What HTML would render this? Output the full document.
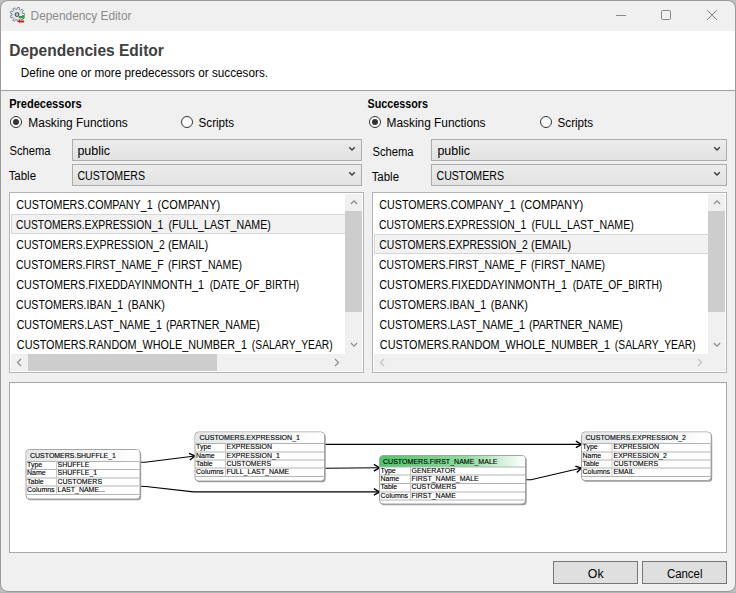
<!DOCTYPE html>
<html lang="en">
<head>
<meta charset="utf-8">
<title>Dependency Editor</title>
<style>
html,body{margin:0;padding:0;}
body{width:736px;height:593px;overflow:hidden;background:#b9bdc2;font-family:"Liberation Sans",sans-serif;font-size:12px;color:#000;position:relative;}
#win{position:absolute;left:0;top:0;width:734px;height:590px;border:1px solid #9b9b9b;border-radius:8px;background:#f0f0f0;overflow:hidden;box-sizing:content-box;}
#bottomstrip{position:absolute;left:0;top:592px;width:736px;height:1px;background:#b4b4b6;}
.abs{position:absolute;}
.t{position:absolute;white-space:nowrap;line-height:14px;height:14px;}
.b{font-weight:bold;}
#hdr{position:absolute;left:0;top:30px;width:734px;height:59px;background:#fff;border-bottom:1px solid #a0a0a0;}
.radio{position:absolute;width:10px;height:10px;border:1px solid #333;border-radius:50%;background:#fff;}
.radio.on::after{content:"";position:absolute;left:2px;top:2px;width:6px;height:6px;border-radius:50%;background:#333;}
.combo{position:absolute;height:20px;border:1px solid #adadad;background:linear-gradient(#ececec,#e2e2e2);}
.combo svg{position:absolute;right:5px;top:6px;}
.list{position:absolute;border:1px solid #b4b4b4;background:#fff;top:191px;height:179px;}
.row{position:absolute;left:1px;height:20px;line-height:20px;white-space:nowrap;}
.row span{position:absolute;left:6px;top:0;}
.sel{background:#f2f2f2;border:1px solid #d6d6d6;box-sizing:border-box;}
.vsb{position:absolute;top:1px;width:17px;height:177px;background:#f0f0f0;}
.hsb{position:absolute;left:1px;top:161px;height:17px;background:#f0f0f0;}
.thumb{position:absolute;background:#cdcdcd;}
#graph{position:absolute;left:8px;top:381px;width:716px;height:169px;border:1px solid #a8a8a8;background:#fff;}
.btn{position:absolute;top:560px;width:83px;height:21px;border:1px solid #757575;background:#dfdfdf;text-align:center;}
.node{position:absolute;}
</style>
</head>
<body>
<div id="win">
  <!-- title bar -->
  <svg class="abs" style="left:9px;top:6px" width="18" height="18" viewBox="0 0 18 18">
    <path d="M14.42,6.40 L14.42,8.60 L12.48,8.60 L11.98,9.99 L13.46,11.23 L12.04,12.92 L10.56,11.68 L9.29,12.41 L9.62,14.32 L7.45,14.70 L7.12,12.80 L5.66,12.54 L4.70,14.21 L2.79,13.11 L3.75,11.44 L2.81,10.31 L0.99,10.97 L0.24,8.90 L2.05,8.24 L2.05,6.76 L0.24,6.10 L0.99,4.03 L2.81,4.69 L3.75,3.56 L2.79,1.89 L4.70,0.79 L5.66,2.46 L7.12,2.20 L7.45,0.30 L9.62,0.68 L9.29,2.59 L10.56,3.32 L12.04,2.08 L13.46,3.77 L11.98,5.01 L12.48,6.40z" fill="#e6eaee" stroke="#7f8890" stroke-width="1" stroke-linejoin="round"/>
    <circle cx="7" cy="7.6" r="1.9" fill="#c9cdd1" stroke="#4a5056" stroke-width="1.1"/>
    <path d="M8.6 9h3.800v-1.400l2.900 2.600-2.900 2.400v-1.500h-3.800z" fill="#2fa043"/>
    <path d="M7.4 14.200l2.800-2v1.200h4v2.200h-4v0.600z" fill="#c8282c"/>
  </svg>
  
  <svg class="abs" style="left:615px;top:8px" width="110" height="14" viewBox="0 0 110 14">
    <g stroke="#888" stroke-width="1" fill="none">
      <line x1="0" y1="6.5" x2="10" y2="6.5"/>
      <rect x="45.5" y="1.5" width="9" height="9" rx="1"/>
      <line x1="91" y1="1" x2="101" y2="11"/><line x1="101" y1="1" x2="91" y2="11"/>
    </g>
  </svg>

  <!-- header -->
  <div id="hdr"></div>
  
  

  <!-- predecessors -->
  
  <div class="radio on" style="left:9px;top:115px"></div>
  
  <div class="radio" style="left:180px;top:115px"></div>
  
  
  <div class="combo" style="left:71px;top:138px;width:288px">
    <svg width="8" height="6" viewBox="0 0 8 6"><path d="M1.2 1.200l2.800 2.800 2.800-2.800" fill="none" stroke="#3c3c3c" stroke-width="1.4"/></svg></div>
  
  <div class="combo" style="left:71px;top:163px;width:288px">
    <svg width="8" height="6" viewBox="0 0 8 6"><path d="M1.2 1.200l2.800 2.800 2.800-2.800" fill="none" stroke="#3c3c3c" stroke-width="1.4"/></svg></div>

  <div class="list" id="llist" style="left:8px;width:353px">
    <div class="row" style="top:1px;width:335px"></div>
    <div class="row sel" style="top:21px;width:335px;height:20px"></div>
    <div class="row" style="top:41px;width:335px"></div>
    <div class="row" style="top:61px;width:335px"></div>
    <div class="row" style="top:81px;width:335px"></div>
    <div class="row" style="top:101px;width:335px"></div>
    <div class="row" style="top:121px;width:335px"></div>
    <div class="row" style="top:141px;width:335px"></div>
    <div class="vsb" style="left:335px">
      <svg class="abs" style="left:4px;top:5px" width="9" height="6" viewBox="0 0 9 6"><path d="M1.9 5l3.100-3.100 3.100 3.100" fill="none" stroke="#8c8c8c" stroke-width="1.2"/></svg>
      <div class="thumb" style="left:0;top:17px;width:17px;height:101px"></div>
      <svg class="abs" style="left:4px;top:148px" width="9" height="6" viewBox="0 0 9 6"><path d="M1.9 1l3.100 3.100 3.100-3.100" fill="none" stroke="#8c8c8c" stroke-width="1.2"/></svg>
    </div>
    <div class="hsb" style="width:335px">
      <svg class="abs" style="left:5px;top:4px" width="6" height="9" viewBox="0 0 6 9"><path d="M5 1l-3.500 3.500 3.500 3.500" fill="none" stroke="#8c8c8c" stroke-width="1.2"/></svg>
      <div class="thumb" style="left:17px;top:0;width:189px;height:17px"></div>
      <svg class="abs" style="left:323px;top:4px" width="6" height="9" viewBox="0 0 6 9"><path d="M1 1l3.500 3.500-3.500 3.500" fill="none" stroke="#8c8c8c" stroke-width="1.2"/></svg>
    </div>
  </div>

  <!-- successors -->
  
  <div class="radio on" style="left:368px;top:115px"></div>
  
  <div class="radio" style="left:539px;top:115px"></div>
  
  
  <div class="combo" style="left:430px;top:138px;width:294px">
    <svg width="8" height="6" viewBox="0 0 8 6"><path d="M1.2 1.200l2.800 2.800 2.800-2.800" fill="none" stroke="#3c3c3c" stroke-width="1.4"/></svg></div>
  
  <div class="combo" style="left:430px;top:163px;width:294px">
    <svg width="8" height="6" viewBox="0 0 8 6"><path d="M1.2 1.200l2.800 2.800 2.800-2.800" fill="none" stroke="#3c3c3c" stroke-width="1.4"/></svg></div>

  <div class="list" id="rlist" style="left:371px;width:353px">
    <div class="row" style="top:1px;width:335px"></div>
    <div class="row" style="top:21px;width:335px"></div>
    <div class="row sel" style="top:41px;width:335px;height:20px"></div>
    <div class="row" style="top:61px;width:335px"></div>
    <div class="row" style="top:81px;width:335px"></div>
    <div class="row" style="top:101px;width:335px"></div>
    <div class="row" style="top:121px;width:335px"></div>
    <div class="row" style="top:141px;width:335px"></div>
    <div class="vsb" style="left:335px">
      <svg class="abs" style="left:4px;top:5px" width="9" height="6" viewBox="0 0 9 6"><path d="M1.9 5l3.100-3.100 3.100 3.100" fill="none" stroke="#8c8c8c" stroke-width="1.2"/></svg>
      <div class="thumb" style="left:0;top:17px;width:17px;height:101px"></div>
      <svg class="abs" style="left:4px;top:148px" width="9" height="6" viewBox="0 0 9 6"><path d="M1.9 1l3.100 3.100 3.100-3.100" fill="none" stroke="#8c8c8c" stroke-width="1.2"/></svg>
    </div>
    <div class="hsb" style="width:335px">
      <svg class="abs" style="left:5px;top:4px" width="6" height="9" viewBox="0 0 6 9"><path d="M5 1l-3.500 3.500 3.500 3.500" fill="none" stroke="#c0c0c0" stroke-width="1.1"/></svg>
      <svg class="abs" style="left:323px;top:4px" width="6" height="9" viewBox="0 0 6 9"><path d="M1 1l3.500 3.500-3.500 3.500" fill="none" stroke="#c0c0c0" stroke-width="1.1"/></svg>
    </div>
  </div>

  <!-- graph -->
  <div id="graph"></div>

  <!-- buttons -->
  <div class="btn" style="left:552px"></div>
  <div class="btn" style="left:641px"></div>
  <div class="t" id="ttl" style="left:28.60px;top:8px;color:#8b8b8b;transform:scaleX(0.9880);">Dependency Editor</div>
  <div class="t b" id="h1" style="left:6.28px;top:41px;font-size:16px;line-height:18px;height:18px;color:#404040;transform:scaleX(0.9719);">Dependencies Editor</div>
  <div class="t" id="h2" style="left:17.06px;top:65px;transform:scaleX(0.9781);">Define one or more predecessors or succesors.</div>
  <div class="t b" id="pl" style="left:5.14px;top:96px;transform:scaleX(0.9205);">Predecessors</div>
  <div class="t" id="pm" style="left:26.86px;top:115px;transform:scaleX(0.9935);">Masking Functions</div>
  <div class="t" id="ps" style="left:197.29px;top:115px;transform:scaleX(0.9698);">Scripts</div>
  <div class="t" id="psc" style="left:6.86px;top:143px;transform:scaleX(0.9337);">Schema</div>
  <div class="t" id="pc1" style="left:77.10px;top:143px;transform:scaleX(1.0396);">public</div>
  <div class="t" id="ptb" style="left:7.29px;top:168px;transform:scaleX(0.9551);">Table</div>
  <div class="t" id="pc2" style="left:71.81px;top:168px;transform:scaleX(0.8831);">CUSTOMERS</div>
  <div class="t b" id="sl" style="left:362.90px;top:96px;transform:scaleX(0.8963);">Successors</div>
  <div class="t" id="sm" style="left:385.43px;top:115px;transform:scaleX(0.9903);">Masking Functions</div>
  <div class="t" id="ss" style="left:556.29px;top:115px;transform:scaleX(0.9698);">Scripts</div>
  <div class="t" id="ssc" style="left:369.86px;top:144px;transform:scaleX(0.9337);">Schema</div>
  <div class="t" id="sc1" style="left:436.62px;top:143px;transform:scaleX(1.0341);">public</div>
  <div class="t" id="stb" style="left:370.29px;top:169px;transform:scaleX(0.9551);">Table</div>
  <div class="t" id="sc2" style="left:430.82px;top:168px;transform:scaleX(0.8829);">CUSTOMERS</div>
  <div class="t" id="bok" style="left:586.78px;top:566px;transform:scaleX(1.0253);">Ok</div>
  <div class="t" id="bcn" style="left:664.51px;top:566px;transform:scaleX(0.9530);">Cancel</div>
  <div class="t" id="l1a" style="left:6.91px;top:197px;transform:scaleX(0.8909);">CUSTOMERS.COMPANY_1</div>
  <div class="t" id="l1b" style="left:154.26px;top:197px;transform:scaleX(0.9247);">(COMPANY)</div>
  <div class="t" id="r1a" style="left:369.91px;top:197px;transform:scaleX(0.8909);">CUSTOMERS.COMPANY_1</div>
  <div class="t" id="r1b" style="left:517.26px;top:197px;transform:scaleX(0.9247);">(COMPANY)</div>
  <div class="t" id="l2a" style="left:3.21px;top:217px;transform:scaleX(0.8592);">CUSTOMERS.EXPRESSION_1</div>
  <div class="t" id="l2b" style="left:160.66px;top:217px;transform:scaleX(0.8859);">(FULL_LAST_NAME)</div>
  <div class="t" id="r2a" style="left:366.22px;top:217px;transform:scaleX(0.8592);">CUSTOMERS.EXPRESSION_1</div>
  <div class="t" id="r2b" style="left:523.66px;top:217px;transform:scaleX(0.8859);">(FULL_LAST_NAME)</div>
  <div class="t" id="l3a" style="left:3.95px;top:237px;transform:scaleX(0.8672);">CUSTOMERS.EXPRESSION_2</div>
  <div class="t" id="l3b" style="left:165.12px;top:237px;transform:scaleX(0.9134);">(EMAIL)</div>
  <div class="t" id="r3a" style="left:366.96px;top:237px;transform:scaleX(0.8673);">CUSTOMERS.EXPRESSION_2</div>
  <div class="t" id="r3b" style="left:527.91px;top:237px;transform:scaleX(0.9093);">(EMAIL)</div>
  <div class="t" id="l4a" style="left:3.58px;top:257px;transform:scaleX(0.8695);">CUSTOMERS.FIRST_NAME_F</div>
  <div class="t" id="l4b" style="left:162.13px;top:257px;transform:scaleX(0.8800);">(FIRST_NAME)</div>
  <div class="t" id="r4a" style="left:366.58px;top:257px;transform:scaleX(0.8695);">CUSTOMERS.FIRST_NAME_F</div>
  <div class="t" id="r4b" style="left:525.13px;top:257px;transform:scaleX(0.8800);">(FIRST_NAME)</div>
  <div class="t" id="l5a" style="left:5.36px;top:277px;transform:scaleX(0.9013);">CUSTOMERS.FIXEDDAYINMONTH_1</div>
  <div class="t" id="l5b" style="left:201.26px;top:277px;transform:scaleX(0.8544);">(DATE_OF_BIRTH)</div>
  <div class="t" id="r5a" style="left:368.36px;top:277px;transform:scaleX(0.9013);">CUSTOMERS.FIXEDDAYINMONTH_1</div>
  <div class="t" id="r5b" style="left:564.26px;top:277px;transform:scaleX(0.8544);">(DATE_OF_BIRTH)</div>
  <div class="t" id="l6a" style="left:8.14px;top:297px;transform:scaleX(0.8841);">CUSTOMERS.IBAN_1</div>
  <div class="t" id="l6b" style="left:125.16px;top:297px;transform:scaleX(0.9085);">(BANK)</div>
  <div class="t" id="r6a" style="left:371.14px;top:297px;transform:scaleX(0.8841);">CUSTOMERS.IBAN_1</div>
  <div class="t" id="r6b" style="left:488.16px;top:297px;transform:scaleX(0.9085);">(BANK)</div>
  <div class="t" id="l7a" style="left:5.85px;top:317px;transform:scaleX(0.8828);">CUSTOMERS.LAST_NAME_1</div>
  <div class="t" id="l7b" style="left:159.44px;top:317px;transform:scaleX(0.8884);">(PARTNER_NAME)</div>
  <div class="t" id="r7a" style="left:369.02px;top:317px;transform:scaleX(0.8838);">CUSTOMERS.LAST_NAME_1</div>
  <div class="t" id="r7b" style="left:522.44px;top:317px;transform:scaleX(0.8884);">(PARTNER_NAME)</div>
  <div class="t" id="l8a" style="left:2.61px;top:337px;transform:scaleX(0.8995);">CUSTOMERS.RANDOM_WHOLE_NUMBER_1</div>
  <div class="t" id="l8b" style="left:244.12px;top:337px;transform:scaleX(0.8545);">(SALARY_YEAR)</div>
  <div class="t" id="r8a" style="left:365.61px;top:337px;transform:scaleX(0.8995);">CUSTOMERS.RANDOM_WHOLE_NUMBER_1</div>
  <div class="t" id="r8b" style="left:607.12px;top:337px;transform:scaleX(0.8545);">(SALARY_YEAR)</div>
<svg class="abs" style="left:-1px;top:-1px" width="736" height="593" viewBox="0 0 736 593" font-family="Liberation Sans, sans-serif" font-size="7px" fill="#000" stroke="#000" stroke-width="0.12" >
<defs><linearGradient id="gh" x1="0" x2="1" y1="0" y2="0"><stop offset="0" stop-color="#e4e6e8"/><stop offset="1" stop-color="#ffffff"/></linearGradient>
<linearGradient id="gg" x1="0" x2="1" y1="0" y2="0"><stop offset="0" stop-color="#4cc766"/><stop offset="0.6" stop-color="#8fdc9f"/><stop offset="1" stop-color="#ffffff"/></linearGradient></defs>
<path d="M140.5,462.3 L145.0,462.3 L195.0,456.0" fill="none" stroke="#000" stroke-width="1.1"/><path d="M-5.6,-3.3 L0,0 L-5.6,3.3" fill="none" stroke="#000" stroke-width="1.4" stroke-linejoin="miter" transform="translate(195.0,456.0) rotate(-7.18)"/>
<path d="M140.5,486.3 L146.0,486.5 L193.5,491.9 L379.5,491.9" fill="none" stroke="#000" stroke-width="1.1"/><path d="M-5.6,-3.3 L0,0 L-5.6,3.3" fill="none" stroke="#000" stroke-width="1.4" stroke-linejoin="miter" transform="translate(379.5,491.9) rotate(0.00)"/>
<path d="M325.0,444.4 L581.5,444.4" fill="none" stroke="#000" stroke-width="1.1"/><path d="M-5.6,-3.3 L0,0 L-5.6,3.3" fill="none" stroke="#000" stroke-width="1.4" stroke-linejoin="miter" transform="translate(581.5,444.4) rotate(0.00)"/>
<path d="M325.0,468.3 L379.5,467.7" fill="none" stroke="#000" stroke-width="1.1"/><path d="M-5.6,-3.3 L0,0 L-5.6,3.3" fill="none" stroke="#000" stroke-width="1.4" stroke-linejoin="miter" transform="translate(379.5,467.7) rotate(-0.63)"/>
<path d="M526.0,479.8 L531.0,479.8 L581.5,468.0" fill="none" stroke="#000" stroke-width="1.1"/><path d="M-5.6,-3.3 L0,0 L-5.6,3.3" fill="none" stroke="#000" stroke-width="1.4" stroke-linejoin="miter" transform="translate(581.5,468.0) rotate(-13.15)"/>
<rect x="27.2" y="450.7" width="114.0" height="49.5" rx="3.5" fill="#9a9a9a" stroke="none"/>
<rect x="26.0" y="449.5" width="114.0" height="49.5" rx="3.5" fill="#fff" stroke="#a4a4a4" stroke-width="1"/>
<path d="M26.5 461.5V453.0a3 3 0 0 1 3-3H136.5a3 3 0 0 1 3 3V461.5z" fill="url(#gh)" stroke="none"/>
<line x1="26.5" y1="461.5" x2="139.5" y2="461.5" stroke="#b4b4b4" stroke-width="1"/>
<line x1="26.5" y1="469.5" x2="139.5" y2="469.5" stroke="#b4b4b4" stroke-width="1"/>
<line x1="26.5" y1="478.0" x2="139.5" y2="478.0" stroke="#b4b4b4" stroke-width="1"/>
<line x1="26.5" y1="486.0" x2="139.5" y2="486.0" stroke="#b4b4b4" stroke-width="1"/>
<line x1="26.5" y1="494.5" x2="139.5" y2="494.5" stroke="#b4b4b4" stroke-width="1"/>
<line x1="56.5" y1="461.5" x2="56.5" y2="494.5" stroke="#c8c8c8" stroke-width="1"/>
<text x="30.0" y="458.0" textLength="86.0" lengthAdjust="spacingAndGlyphs">CUSTOMERS.SHUFFLE_1</text>
<text x="27.0" y="467.0">Type</text>
<text x="57.5" y="467.0">SHUFFLE</text>
<text x="27.0" y="475.0">Name</text>
<text x="57.5" y="475.0">SHUFFLE_1</text>
<text x="27.0" y="483.5">Table</text>
<text x="57.5" y="483.5">CUSTOMERS</text>
<text x="27.0" y="492.0">Columns</text>
<text x="57.5" y="492.0">LAST_NAME...</text>
<rect x="196.2" y="433.2" width="129.5" height="49.0" rx="3.5" fill="#9a9a9a" stroke="none"/>
<rect x="195.0" y="432.0" width="129.5" height="49.0" rx="3.5" fill="#fff" stroke="#a4a4a4" stroke-width="1"/>
<path d="M195.5 443.5V435.5a3 3 0 0 1 3-3H321.0a3 3 0 0 1 3 3V443.5z" fill="url(#gh)" stroke="none"/>
<line x1="195.5" y1="443.5" x2="324.0" y2="443.5" stroke="#b4b4b4" stroke-width="1"/>
<line x1="195.5" y1="452.0" x2="324.0" y2="452.0" stroke="#b4b4b4" stroke-width="1"/>
<line x1="195.5" y1="460.0" x2="324.0" y2="460.0" stroke="#b4b4b4" stroke-width="1"/>
<line x1="195.5" y1="468.0" x2="324.0" y2="468.0" stroke="#b4b4b4" stroke-width="1"/>
<line x1="195.5" y1="476.5" x2="324.0" y2="476.5" stroke="#b4b4b4" stroke-width="1"/>
<line x1="225.5" y1="443.5" x2="225.5" y2="476.5" stroke="#c8c8c8" stroke-width="1"/>
<text x="199.5" y="440.0" textLength="100.5" lengthAdjust="spacingAndGlyphs">CUSTOMERS.EXPRESSION_1</text>
<text x="196.0" y="449.0">Type</text>
<text x="226.5" y="449.0">EXPRESSION</text>
<text x="196.0" y="457.5">Name</text>
<text x="226.5" y="457.5">EXPRESSION_1</text>
<text x="196.0" y="465.5">Table</text>
<text x="226.5" y="465.5">CUSTOMERS</text>
<text x="196.0" y="474.0">Columns</text>
<text x="226.5" y="474.0">FULL_LAST_NAME</text>
<rect x="380.7" y="456.7" width="146.0" height="48.5" rx="3.5" fill="#9a9a9a" stroke="none"/>
<rect x="379.5" y="455.5" width="146.0" height="48.5" rx="3.5" fill="#fff" stroke="#a4a4a4" stroke-width="1"/>
<path d="M380.0 467.0V459.0a3 3 0 0 1 3-3H522.0a3 3 0 0 1 3 3V467.0z" fill="url(#gg)" stroke="none"/>
<line x1="380.0" y1="467.0" x2="525.0" y2="467.0" stroke="#b4b4b4" stroke-width="1"/>
<line x1="380.0" y1="475.0" x2="525.0" y2="475.0" stroke="#b4b4b4" stroke-width="1"/>
<line x1="380.0" y1="483.5" x2="525.0" y2="483.5" stroke="#b4b4b4" stroke-width="1"/>
<line x1="380.0" y1="492.0" x2="525.0" y2="492.0" stroke="#b4b4b4" stroke-width="1"/>
<line x1="380.0" y1="500.0" x2="525.0" y2="500.0" stroke="#b4b4b4" stroke-width="1"/>
<line x1="410.5" y1="467.0" x2="410.5" y2="500.0" stroke="#c8c8c8" stroke-width="1"/>
<text x="383.0" y="463.5" textLength="114.5" lengthAdjust="spacingAndGlyphs">CUSTOMERS.FIRST_NAME_MALE</text>
<text x="380.5" y="472.5">Type</text>
<text x="411.5" y="472.5">GENERATOR</text>
<text x="380.5" y="480.5">Name</text>
<text x="411.5" y="480.5">FIRST_NAME_MALE</text>
<text x="380.5" y="488.5">Table</text>
<text x="411.5" y="488.5">CUSTOMERS</text>
<text x="380.5" y="497.5">Columns</text>
<text x="411.5" y="497.5">FIRST_NAME</text>
<rect x="582.7" y="433.2" width="129.5" height="48.5" rx="3.5" fill="#9a9a9a" stroke="none"/>
<rect x="581.5" y="432.0" width="129.5" height="48.5" rx="3.5" fill="#fff" stroke="#a4a4a4" stroke-width="1"/>
<path d="M582.0 443.5V435.5a3 3 0 0 1 3-3H707.5a3 3 0 0 1 3 3V443.5z" fill="url(#gh)" stroke="none"/>
<line x1="582.0" y1="443.5" x2="710.5" y2="443.5" stroke="#b4b4b4" stroke-width="1"/>
<line x1="582.0" y1="452.0" x2="710.5" y2="452.0" stroke="#b4b4b4" stroke-width="1"/>
<line x1="582.0" y1="460.0" x2="710.5" y2="460.0" stroke="#b4b4b4" stroke-width="1"/>
<line x1="582.0" y1="468.0" x2="710.5" y2="468.0" stroke="#b4b4b4" stroke-width="1"/>
<line x1="582.0" y1="476.5" x2="710.5" y2="476.5" stroke="#b4b4b4" stroke-width="1"/>
<line x1="612.0" y1="443.5" x2="612.0" y2="476.5" stroke="#c8c8c8" stroke-width="1"/>
<text x="585.5" y="440.0" textLength="100.5" lengthAdjust="spacingAndGlyphs">CUSTOMERS.EXPRESSION_2</text>
<text x="582.5" y="449.0">Type</text>
<text x="613.5" y="449.0">EXPRESSION</text>
<text x="582.5" y="457.5">Name</text>
<text x="613.5" y="457.5">EXPRESSION_2</text>
<text x="582.5" y="465.5">Table</text>
<text x="613.5" y="465.5">CUSTOMERS</text>
<text x="582.5" y="474.0">Columns</text>
<text x="613.5" y="474.0">EMAIL</text>
</svg>
</div>
<div id="bottomstrip"></div>
</body>
</html>
